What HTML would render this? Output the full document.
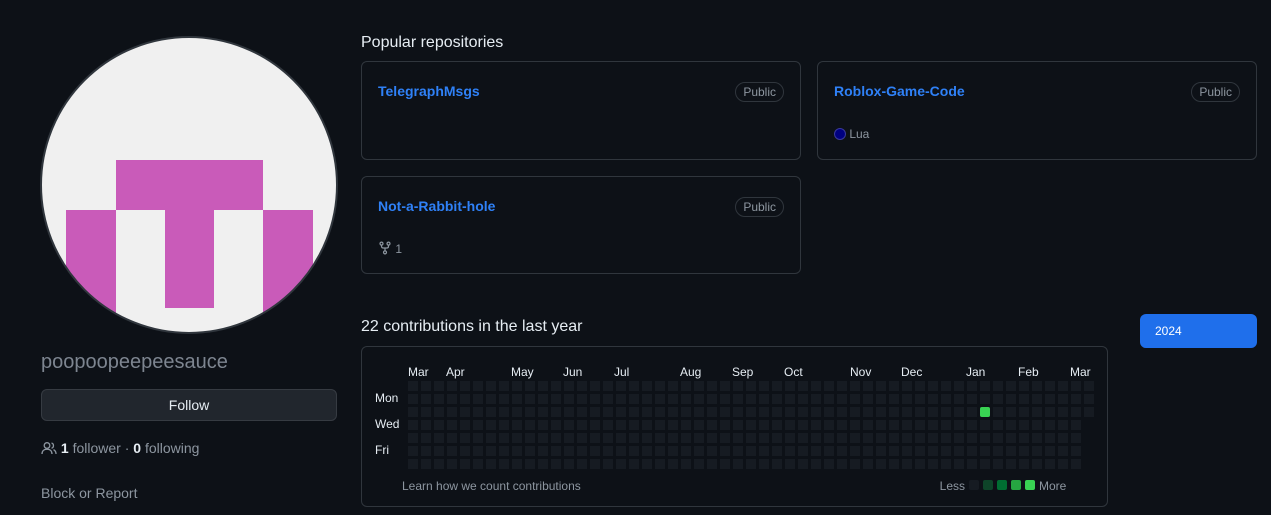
<!DOCTYPE html>
<html><head><meta charset="utf-8"><style>
*{margin:0;padding:0;box-sizing:border-box}
body{width:1271px;height:515px;background:#0d1117;color:#e6edf3;font-family:"Liberation Sans",sans-serif;position:relative;overflow:hidden}
.a{position:absolute}
.card{position:absolute;border:1px solid #30363d;border-radius:6px}
.name{position:absolute;left:16px;top:21px;color:#2f81f7;font-weight:600;font-size:14px}
.pub{position:absolute;right:16px;top:20px;border:1px solid #30363d;border-radius:10px;font-size:12px;color:#8d96a0;padding:1px 7px;line-height:16px}
.ml{position:absolute;top:365px;font-size:12px;color:#e6edf3}
.dl{position:absolute;left:375px;font-size:12px}
</style></head><body>
<svg class="a" style="left:40px;top:36px" width="298" height="298" viewBox="0 0 298 298">
<defs><clipPath id="c"><circle cx="149" cy="149" r="148"/></clipPath></defs>
<g clip-path="url(#c)">
<rect width="298" height="298" fill="#f0f0f0"/>
<rect x="76" y="124" width="147" height="50" fill="#c95bb9"/>
<rect x="125" y="124" width="49" height="148" fill="#c95bb9"/>
<rect x="26" y="174" width="50" height="124" fill="#c95bb9"/>
<rect x="223" y="174" width="50" height="124" fill="#c95bb9"/>
</g>
<circle cx="149" cy="149" r="148" fill="none" stroke="#30363d" stroke-width="2"/>
</svg>
<div class="a" style="left:41px;top:351px;font-size:20px;color:#7d8590;font-weight:300">poopoopeepeesauce</div>
<div class="a" style="left:41px;top:389px;width:296px;height:32px;background:#21262d;border:1px solid #363b42;border-radius:6px;text-align:center;line-height:30px;font-size:14px">Follow</div>
<div class="a" style="left:41px;top:440px;font-size:14px;color:#8d96a0">
<svg width="16" height="16" viewBox="0 0 16 16" style="vertical-align:-3px" fill="none" stroke="#8d96a0" stroke-width="1.3"><circle cx="6" cy="5.5" r="2.8"/><path d="M1 14c0-3 2-4.8 5-4.8s5 1.8 5 4.8"/><path d="M10.5 3a2.7 2.7 0 010 5.2M12.5 9.6c1.5.7 2.5 2.2 2.5 4.4"/></svg>
<b style="color:#e6edf3">1</b> follower · <b style="color:#e6edf3">0</b> following</div>
<div class="a" style="left:41px;top:485px;font-size:14px;color:#8d96a0">Block or Report</div>

<div class="a" style="left:361px;top:34px;font-size:16px">Popular repositories</div>
<div class="card" style="left:361px;top:61px;width:440px;height:99px"><div class="name">TelegraphMsgs</div><div class="pub">Public</div></div>
<div class="card" style="left:817px;top:61px;width:440px;height:99px"><div class="name">Roblox-Game-Code</div><div class="pub">Public</div>
<div class="a" style="left:16px;top:65px;font-size:12px;color:#8d96a0"><span style="display:inline-block;width:12px;height:12px;border-radius:50%;background:#000080;border:1px solid #3a3a9a;vertical-align:-2px"></span> Lua</div></div>
<div class="card" style="left:361px;top:176px;width:440px;height:98px"><div class="name">Not-a-Rabbit-hole</div><div class="pub">Public</div>
<div class="a" style="left:16px;top:63px;font-size:12px;color:#8d96a0"><svg width="14" height="16" viewBox="0 0 16 16" fill="none" stroke="#8d96a0" stroke-width="1.4" style="vertical-align:-3px"><circle cx="4" cy="3" r="1.7"/><circle cx="12" cy="3" r="1.7"/><circle cx="8" cy="13" r="1.7"/><path d="M4 4.7v1.3q0 2 2 2h4q2 0 2-2V4.7M8 8v3.3"/></svg> 1</div></div>

<div class="a" style="left:361px;top:318px;font-size:16px">22 contributions in the last year</div>
<div class="a" style="left:1140px;top:314px;width:117px;height:34px;background:#1f6feb;border-radius:6px;font-size:12px;color:#fff;padding:10px 0 0 15px">2024</div>
<div class="card" style="left:361px;top:346px;width:747px;height:161px"></div>
<div class="ml" style="left:408px">Mar</div><div class="ml" style="left:446px">Apr</div><div class="ml" style="left:511px">May</div><div class="ml" style="left:563px">Jun</div><div class="ml" style="left:614px">Jul</div><div class="ml" style="left:680px">Aug</div><div class="ml" style="left:732px">Sep</div><div class="ml" style="left:784px">Oct</div><div class="ml" style="left:850px">Nov</div><div class="ml" style="left:901px">Dec</div><div class="ml" style="left:966px">Jan</div><div class="ml" style="left:1018px">Feb</div><div class="ml" style="left:1070px">Mar</div>
<div class="dl" style="top:391px">Mon</div><div class="dl" style="top:417px">Wed</div><div class="dl" style="top:443px">Fri</div>
<div class="a" style="left:408px;top:381px;width:689px;height:91px;background-color:#161b22;background-image:linear-gradient(to right,transparent 10px,#0d1117 10px),linear-gradient(to bottom,transparent 10px,#0d1117 10px);background-size:13px 13px,13px 13px"></div>
<div class="a" style="left:1083px;top:420px;width:20px;height:55px;background:#0d1117"></div>
<div class="a" style="left:980px;top:407px;width:10px;height:10px;background:#39d353;border-radius:2px"></div>
<div class="a" style="left:402px;top:479px;font-size:12px;color:#8d96a0">Learn how we count contributions</div>
<div class="a" style="left:900px;width:65px;text-align:right;top:479px;font-size:12px;color:#8d96a0">Less</div>
<div class="a" style="left:969px;top:480px;width:10px;height:10px;background:#161b22;border-radius:2px"></div>
<div class="a" style="left:983px;top:480px;width:10px;height:10px;background:#0e4429;border-radius:2px"></div>
<div class="a" style="left:997px;top:480px;width:10px;height:10px;background:#006d32;border-radius:2px"></div>
<div class="a" style="left:1011px;top:480px;width:10px;height:10px;background:#26a641;border-radius:2px"></div>
<div class="a" style="left:1025px;top:480px;width:10px;height:10px;background:#39d353;border-radius:2px"></div>
<div class="a" style="left:1039px;top:479px;font-size:12px;color:#8d96a0">More</div>
</body></html>
